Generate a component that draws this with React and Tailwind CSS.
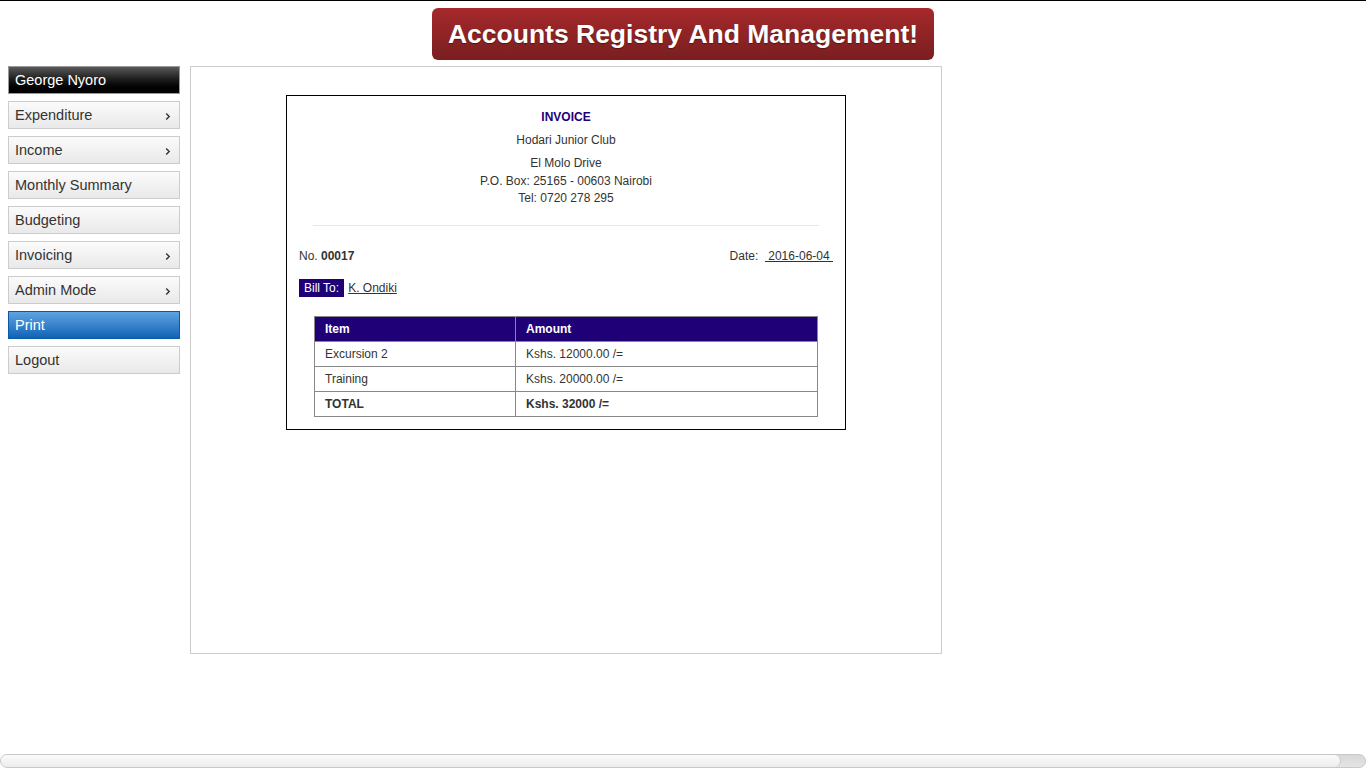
import React from "react";

const menu = [
  { label: "Expenditure", arrow: true },
  { label: "Income", arrow: true },
  { label: "Monthly Summary" },
  { label: "Budgeting" },
  { label: "Invoicing", arrow: true },
  { label: "Admin Mode", arrow: true },
  { label: "Print", active: true },
  { label: "Logout" },
];

function Chevron() {
  return (
    <svg width="6" height="9" viewBox="0 0 6 9" className="mr-[2px]">
      <path d="M1.2 1.5 L4.2 4.5 L1.2 7.5" fill="none" stroke="#333" strokeWidth="1.4" />
    </svg>
  );
}

export default function App() {
  return (
    <div
      className="min-h-[768px] flex flex-col bg-white border-t border-black"
      style={{ fontFamily: '"Liberation Sans", Arial, sans-serif' }}
    >
      <div className="flex justify-center pt-[7px]">
        <div className="h-[52px] w-[502px] flex items-center justify-center pt-[2px] rounded-[6px] bg-gradient-to-b from-[#a6292b] to-[#7a1e20] text-white font-bold text-[26.5px] [text-shadow:0_1px_1px_rgba(0,0,0,0.4)]">
          Accounts Registry And Management!
        </div>
      </div>

      <div className="flex items-start pl-[8px] pt-[6px] gap-[10px]">
        <div className="w-[172px] flex flex-col gap-[7px]">
          <div className="h-[28px] flex items-center pl-[6px] pt-[2px] text-white text-[14.5px] border border-[#999] bg-gradient-to-b from-[#5a5a5a] via-[#1a1a1a] to-[#000]">
            George Nyoro
          </div>
          {menu.map((m) => (
            <div
              key={m.label}
              className={
                m.active
                  ? "h-[28px] flex items-center justify-between pl-[6px] pr-[6px] pt-[2px] text-white text-[14.5px] border border-[#0a5aa8] bg-gradient-to-b from-[#5ea4e2] to-[#0b63b6]"
                  : "h-[28px] flex items-center justify-between pl-[6px] pr-[6px] pt-[2px] text-[#333] text-[14.5px] border border-[#cccccc] bg-gradient-to-b from-[#fbfbfb] to-[#e9e9e9]"
              }
            >
              <span>{m.label}</span>
              {m.arrow && <Chevron />}
            </div>
          ))}
        </div>

        <div className="w-[752px] h-[588px] border border-[#cccccc] flex justify-center pt-[28px]">
          <div className="w-[560px] h-[335px] border border-black text-[12px] text-[#333] flex flex-col">
            <div className="flex flex-col items-center pt-[12px]">
              <div className="leading-[18px] font-bold text-[#1f0077]">INVOICE</div>
              <div className="leading-[18px] mt-[5px]">Hodari Junior Club</div>
              <div className="mt-[6px] flex flex-col items-center leading-[17.5px]">
                <span>El Molo Drive</span>
                <span>P.O. Box: 25165 - 00603 Nairobi</span>
                <span>Tel: 0720 278 295</span>
              </div>
            </div>
            <div className="mx-[26px] mt-[17px] h-px bg-[#e6e6e6]" />
            <div className="flex justify-between items-center px-[12px] mt-[21px] leading-[18px]">
              <div>
                No. <span className="font-bold">00017</span>
              </div>
              <div className="whitespace-pre">
                {"Date:  "}<span className="underline">{" 2016-06-04 "}</span>
              </div>
            </div>
            <div className="flex items-center px-[12px] mt-[14px]">
              <span className="h-[18px] flex items-center px-[5px] bg-[#1f0077] text-white">Bill To:</span>
              <span className="ml-[4px] underline">K. Ondiki</span>
            </div>
            <div className="px-[27px] mt-[19px]">
              <table className="w-[504px] border-collapse border border-[#888]">
                <tbody>
                  <tr className="h-[25px] bg-[#1f0077] text-white font-bold">
                    <td className="w-[201px] border border-[#888] pl-[10px]">Item</td>
                    <td className="border border-[#888] pl-[10px]">Amount</td>
                  </tr>
                  <tr className="h-[25px]">
                    <td className="border border-[#888] pl-[10px]">Excursion 2</td>
                    <td className="border border-[#888] pl-[10px]">Kshs. 12000.00 /=</td>
                  </tr>
                  <tr className="h-[25px]">
                    <td className="border border-[#888] pl-[10px]">Training</td>
                    <td className="border border-[#888] pl-[10px]">Kshs. 20000.00 /=</td>
                  </tr>
                  <tr className="h-[25px] font-bold">
                    <td className="border border-[#888] pl-[10px]">TOTAL</td>
                    <td className="border border-[#888] pl-[10px]">Kshs. 32000 /=</td>
                  </tr>
                </tbody>
              </table>
            </div>
          </div>
        </div>
      </div>

      <div className="mt-auto h-[14px] w-full rounded-full border border-[#c8c8c8] bg-gradient-to-b from-[#d8d8d8] to-[#e4e4e4] flex">
        <div className="w-[1340px] h-full rounded-full border-r border-[#c8c8c8] bg-gradient-to-b from-[#fbfbfb] to-[#ececec]" />
      </div>
    </div>
  );
}
